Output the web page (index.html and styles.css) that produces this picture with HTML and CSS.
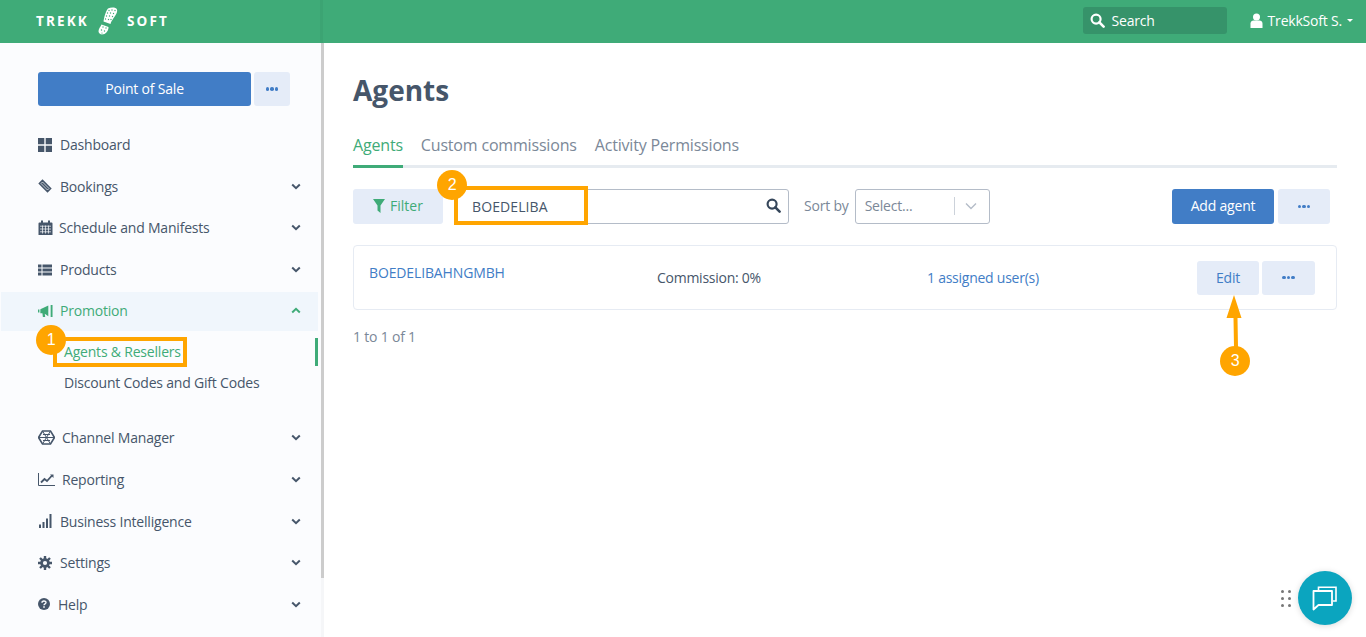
FILE: index.html
```html
<!DOCTYPE html>
<html lang="en">
<head>
<meta charset="utf-8">
<title>Agents</title>
<link rel="stylesheet" href="styles.css">
</head>
<body>
<header class="topbar">
  <div class="brand">
    <span class="brand-word">TREKK</span>
    <svg class="boot" viewBox="0 0 20 28"><path d="M10 1.500c3-1.500 8-1.500 9 1 1 3-2.500 7-4 9.500-1 1.500-2 3-2.500 5l-7-2.500c.5-4 2-10 4.500-13z" fill="#fff"/><path d="M3.500 17.500l7 2.500c.2 3-2 6.500-5 7.300-2.500.6-5-.5-5-3 0-2.500 2-4.500 3-6.800z" fill="#fff"/><g fill="#3fab78"><circle cx="11" cy="3.500" r=".7"/><circle cx="14" cy="3" r=".7"/><circle cx="17" cy="3.500" r=".7"/><circle cx="9.500" cy="6" r=".7"/><circle cx="12.500" cy="6" r=".7"/><circle cx="15.500" cy="6.500" r=".7"/><circle cx="8.500" cy="9" r=".7"/><circle cx="11.500" cy="9" r=".7"/><circle cx="14.500" cy="9.500" r=".7"/><circle cx="7.500" cy="12" r=".7"/><circle cx="10.500" cy="12.500" r=".7"/><circle cx="13" cy="12.500" r=".7"/><circle cx="5" cy="20" r=".7"/><circle cx="8" cy="21" r=".7"/><circle cx="3.500" cy="23" r=".7"/><circle cx="6.500" cy="24" r=".7"/><circle cx="4" cy="26" r=".6"/></g></svg>
    <span class="brand-word">SOFT</span>
  </div>
  <div class="top-right">
    <div class="top-search">
      <svg class="ico-14" viewBox="0 0 16 16"><circle cx="6.500" cy="6.500" r="4.800" fill="none" stroke="#fff" stroke-width="2.300"/><path d="M10 10l4.500 4.500" stroke="#fff" stroke-width="2.800" stroke-linecap="round"/></svg>
      <span>Search</span>
    </div>
    <div class="top-user">
      <svg class="ico-user" viewBox="0 0 13 15"><circle cx="6.500" cy="4" r="3.500" fill="#fff"/><path d="M.5 15V10.500C.5 8.500 2 7.500 3.500 7.500h6c1.500 0 3 1 3 3V15z" fill="#fff"/></svg>
      <span>TrekkSoft S.</span>
      <span class="caret"></span>
    </div>
  </div>
</header>

<div class="layout">
  <aside class="sidebar">
    <div class="pos-row">
      <button class="btn btn-primary pos-btn">Point of Sale</button>
      <button class="btn btn-light more-small"><span class="dots"><i></i><i></i><i></i></span></button>
    </div>
    <nav class="nav">
      <a class="nav-row">
        <svg class="nav-ico" viewBox="0 0 14 14"><path d="M0 0h6.300v6.300H0zM7.700 0H14v6.300H7.700zM0 7.700h6.300V14H0zM7.700 7.700H14V14H7.700z" fill="#46566a"/></svg>
        <span class="nav-label">Dashboard</span>
      </a>
      <a class="nav-row">
        <svg class="nav-ico" viewBox="0 0 14 14"><path d="M4.500.3l9.200 9.200-4.200 4.200L.3 4.500z" fill="#46566a"/><path d="M4.500 3l6.500 6.500-1.500 1.500L3 4.500z" fill="none" stroke="#fbfcfe" stroke-width=".7"/></svg>
        <span class="nav-label">Bookings</span>
        <svg class="chev" viewBox="0 0 10 7"><path d="M1.200 1.500L5 5.200l3.800-3.700" fill="none" stroke="#46566a" stroke-width="2"/></svg>
      </a>
      <a class="nav-row">
        <svg class="nav-ico nav-ico-cal" viewBox="0 0 14 15"><path d="M0 3.500a1 1 0 0 1 1-1h1.500V.5h2v2h5v-2h2v2H13a1 1 0 0 1 1 1V15H0z" fill="#46566a"/><path d="M1.500 6.200h11M1.500 9h11M1.500 11.800h11M4 5.500v8M7 5.500v8M10 5.500v8" stroke="#fbfcfe" stroke-width=".7"/></svg>
        <span class="nav-label">Schedule and Manifests</span>
        <svg class="chev" viewBox="0 0 10 7"><path d="M1.200 1.500L5 5.200l3.800-3.700" fill="none" stroke="#46566a" stroke-width="2"/></svg>
      </a>
      <a class="nav-row">
        <svg class="nav-ico" viewBox="0 0 14 12"><path d="M0 .5h3.500v3H0zM4.500 .5H14v3H4.500zM0 4.500h3.500v3H0zM4.500 4.500H14v3H4.500zM0 8.500h3.500v3H0zM4.500 8.500H14v3H4.500z" fill="#46566a"/></svg>
        <span class="nav-label">Products</span>
        <svg class="chev" viewBox="0 0 10 7"><path d="M1.200 1.500L5 5.200l3.800-3.700" fill="none" stroke="#46566a" stroke-width="2"/></svg>
      </a>
      <a class="nav-row nav-active">
        <svg class="nav-ico nav-ico-promo" viewBox="0 0 16 14"><path d="M0 5.500h1.500v3H0zM2.500 5L11 1v11.500L7.200 10l.5 3.500H5.200L4.700 9.500H2.500zM13.500 .5h2v13h-2z" fill="#3fab78"/></svg>
        <span class="nav-label">Promotion</span>
        <svg class="chev" viewBox="0 0 10 7"><path d="M1.200 5.500L5 1.800l3.800 3.700" fill="none" stroke="#3fab78" stroke-width="2"/></svg>
      </a>
      <div class="subnav">
        <a class="sub-row sub-current">Agents &amp; Resellers</a>
        <a class="sub-row">Discount Codes and Gift Codes</a>
      </div>
      <a class="nav-row">
        <svg class="nav-ico nav-ico-hex" viewBox="0 0 17 15"><path d="M4.500 1h8L16.500 7.500 12.500 14h-8L.5 7.500z" fill="none" stroke="#46566a" stroke-width="1.600"/><path d="M4.500 1l8 13M12.500 1l-8 13M.5 7.500h16M5 4.500h7M5 10.500h7" stroke="#46566a" stroke-width="1"/></svg>
        <span class="nav-label">Channel Manager</span>
        <svg class="chev" viewBox="0 0 10 7"><path d="M1.200 1.500L5 5.200l3.800-3.700" fill="none" stroke="#46566a" stroke-width="2"/></svg>
      </a>
      <a class="nav-row">
        <svg class="nav-ico nav-ico-hex" viewBox="0 0 17 13"><path d="M.5 0v12.500H17" fill="none" stroke="#46566a" stroke-width="1"/><path d="M3 9.500l3.500-3.500 2.500 2 5-5.500" fill="none" stroke="#46566a" stroke-width="1.800"/><path d="M12 1.500h3.500V5z" fill="#46566a"/></svg>
        <span class="nav-label">Reporting</span>
        <svg class="chev" viewBox="0 0 10 7"><path d="M1.200 1.500L5 5.200l3.800-3.700" fill="none" stroke="#46566a" stroke-width="2"/></svg>
      </a>
      <a class="nav-row">
        <svg class="nav-ico" viewBox="0 0 14 14"><path d="M1 10.500h2V14H1zM4.500 8h2v6h-2zM8 4.500h2V14H8zM11.500 0h2v14h-2z" fill="#46566a"/></svg>
        <span class="nav-label">Business Intelligence</span>
        <svg class="chev" viewBox="0 0 10 7"><path d="M1.200 1.500L5 5.200l3.800-3.700" fill="none" stroke="#46566a" stroke-width="2"/></svg>
      </a>
      <a class="nav-row">
        <svg class="nav-ico" viewBox="0 0 14 14"><circle cx="7" cy="7" r="3.500" fill="none" stroke="#46566a" stroke-width="2.600"/><path d="M7 0v14M0 7h14M2 2l10 10M12 2L2 12" stroke="#46566a" stroke-width="2.400"/><circle cx="7" cy="7" r="2.100" fill="#fbfcfe"/></svg>
        <span class="nav-label">Settings</span>
        <svg class="chev" viewBox="0 0 10 7"><path d="M1.200 1.500L5 5.200l3.800-3.700" fill="none" stroke="#46566a" stroke-width="2"/></svg>
      </a>
      <a class="nav-row">
        <svg class="nav-ico nav-ico-help" viewBox="0 0 12 12"><circle cx="6" cy="6" r="6" fill="#46566a"/><path d="M4 4.700C4 2.500 8 2.500 8 4.500c0 1.500-2 1.300-2 2.800" fill="none" stroke="#fbfcfe" stroke-width="1.400"/><path d="M5.200 8.300h1.600v1.500H5.200z" fill="#fbfcfe"/></svg>
        <span class="nav-label">Help</span>
        <svg class="chev" viewBox="0 0 10 7"><path d="M1.200 1.500L5 5.200l3.800-3.700" fill="none" stroke="#46566a" stroke-width="2"/></svg>
      </a>
    </nav>
    <span class="active-mark"></span>
    <span class="scroll-thumb"></span>
    <span class="note-box note-box-1"></span>
    <span class="note-num note-num-1">1</span>
  </aside>

  <main class="main">
    <h1 class="title">Agents</h1>
    <div class="tabs">
      <a class="tab tab-active">Agents</a>
      <a class="tab">Custom commissions</a>
      <a class="tab">Activity Permissions</a>
    </div>
    <div class="toolbar">
      <button class="btn btn-light filter-btn">
        <svg class="ico-filter" viewBox="0 0 12 14"><path d="M0 0h12L7.500 6.500V14l-3-2.500v-5z" fill="#3fab78"/></svg>
        <span>Filter</span>
      </button>
      <div class="search-box">
        <span class="search-value">BOEDELIBA</span>
        <svg class="ico-14" viewBox="0 0 16 16"><circle cx="6.500" cy="6.500" r="4.800" fill="none" stroke="#35465a" stroke-width="2.300"/><path d="M10 10l4.500 4.500" stroke="#35465a" stroke-width="2.800" stroke-linecap="round"/></svg>
        <span class="note-box note-box-2"></span>
        <span class="note-num note-num-2">2</span>
      </div>
      <span class="sort-label">Sort by</span>
      <div class="select-box">
        <span class="select-text">Select...</span>
        <span class="select-sep"></span>
        <svg class="select-chev" viewBox="0 0 12 8"><path d="M1 1.500l5 5 5-5" fill="none" stroke="#b4bcc8" stroke-width="1.400"/></svg>
      </div>
      <div class="toolbar-actions">
        <button class="btn btn-primary add-btn">Add agent</button>
        <button class="btn btn-light more-wide"><span class="dots"><i></i><i></i><i></i></span></button>
      </div>
    </div>
    <section class="card">
      <a class="card-name">BOEDELIBAHNGMBH</a>
      <span class="card-commission">Commission: 0%</span>
      <a class="card-users">1 assigned user(s)</a>
      <div class="card-actions">
        <button class="btn btn-light edit-btn">Edit</button>
        <button class="btn btn-light more-wide"><span class="dots"><i></i><i></i><i></i></span></button>
        <svg class="note-arrow" viewBox="0 0 20 54"><path d="M9 1L16.500 24H12.500L13 53H9L8.500 24H1.500z" fill="#ffa500"/></svg>
        <span class="note-num note-num-3">3</span>
      </div>
    </section>
    <p class="pager">1 to 1 of 1</p>
  </main>
</div>

<div class="chat-dots"><i></i><i></i><i></i><i></i><i></i><i></i></div>
<div class="chat">
  <svg viewBox="0 0 26 26"><path d="M6.500 5V2.200h17.500V16H21" fill="none" stroke="#fff" stroke-width="1.600"/><path d="M1.500 6h18.500v14H6.500L1.500 24.500z" fill="none" stroke="#fff" stroke-width="1.800" stroke-linejoin="round"/></svg>
</div>
</body>
</html>
```
FILE: styles.css
```css
* { box-sizing: border-box; }
html, body { margin: 0; height: 100%; overflow: hidden; }
body {
  font-family: "Open Sans", "Noto Sans", sans-serif;
  font-size: 14px;
  color: #46566a;
  background: #fff;
  letter-spacing: -0.2px;
}
a { color: inherit; text-decoration: none; }
button { font: inherit; letter-spacing: inherit; border: 0; padding: 0; }

.topbar {
  position: relative;
  height: 43px;
  background: #3fab78;
  display: flex;
  align-items: center;
  justify-content: space-between;
  padding: 0 13px 2px 36px;
  color: #fff;
}
.topbar::after {
  content: "";
  position: absolute;
  left: 320px;
  top: 0;
  width: 3px;
  height: 100%;
  background: rgba(0, 0, 0, .04);
}
.brand { display: flex; align-items: center; gap: 9px; }
.brand-word { font-size: 13.500px; font-weight: 700; letter-spacing: 2.150px; }
.boot { width: 20px; height: 28px; }
.top-right { display: flex; align-items: center; }
.top-search {
  width: 144px;
  height: 27px;
  margin-right: 23px;
  padding-left: 7px;
  background: #36936a;
  border-radius: 3px;
  display: flex;
  align-items: center;
  gap: 7px;
}
.top-user { display: flex; align-items: center; gap: 5px; }
.ico-14 { width: 15px; height: 15px; flex: none; }
.ico-user { width: 13px; height: 15px; }
.caret {
  border-left: 3px solid transparent;
  border-right: 3px solid transparent;
  border-top: 3px solid #fff;
}

.layout { display: flex; height: 594px; }
.sidebar {
  position: relative;
  width: 324px;
  flex: none;
  padding: 29px 0 0;
  background: #fbfcfe;
  border-right: 3px solid #f5f6f8;
}
.scroll-thumb {
  position: absolute;
  top: 0;
  right: -3px;
  width: 3px;
  height: 535px;
  background: #ccc;
}
.pos-row { display: flex; gap: 3px; padding-left: 38px; }
.btn {
  height: 34px;
  border-radius: 3px;
  display: inline-flex;
  align-items: center;
  justify-content: center;
  cursor: pointer;
}
.btn-primary { background: #417dc6; color: #fff; }
.btn-light { background: #e5ecf8; color: #417dc6; }
.pos-btn { width: 213px; padding-bottom: 2px; }
.more-small { width: 36px; }
.more-wide { width: 53px; }
.dots { display: flex; gap: 1px; }
.dots i { width: 3.500px; height: 3.500px; border-radius: 50%; background: #417dc6; }

.nav { margin-top: 18px; width: 317px; margin-left: 1px; }
.nav-row {
  height: 41.600px;
  display: flex;
  align-items: center;
  padding: 0 17px 0 37px;
}
.nav-ico { width: 14px; height: 14px; flex: none; margin-right: 8px; }
.nav-ico-cal { width: 15px; height: 15px; margin-right: 6px; }
.nav-ico-promo { width: 15px; margin-right: 7px; }
.nav-ico-hex { width: 17px; height: 15px; margin-right: 7px; }
.nav-ico-help { width: 12px; height: 12px; margin-right: 8px; }
.nav-label { flex: 1; }
.chev { width: 10px; height: 7px; flex: none; }
.nav-active {
  height: 39px;
  margin: 1.600px 0 .4px;
  padding-bottom: 1px;
  background: #f0f6fc;
  color: #3fab78;
}
.subnav { display: flex; flex-direction: column; padding: 5px 0 18.800px 63px; }
.sub-row { height: 31px; display: flex; align-items: center; }
.sub-current { color: #3fab78; }
.active-mark {
  position: absolute;
  left: 315px;
  top: 295px;
  width: 3px;
  height: 28px;
  background: #3fab78;
}

.main { flex: 1; padding: 27px 29px 0 29px; }
.title { margin: 0; font-size: 28px; line-height: 41px; font-weight: 700; color: #46566a; letter-spacing: 0; }
.tabs {
  display: flex;
  gap: 18px;
  margin-top: 19px;
  border-bottom: 3px solid #e6ebf0;
  height: 38px;
}
.tab { font-size: 16px; line-height: 24px; height: 38px; padding-top: 3px; color: #7b8898; letter-spacing: -0.18px; }
.tab-active { color: #3fab78; border-bottom: 3px solid #3fab78; }

.toolbar { display: flex; align-items: center; margin-top: 21px; height: 35px; }
.filter-btn { width: 90px; height: 35px; gap: 5px; padding: 0 0 2px; color: #3fab78; background: #e5ecf8; letter-spacing: 0; }
.ico-filter { width: 12px; height: 14px; }
.search-box {
  position: relative;
  width: 334px;
  height: 35px;
  margin-left: 12px;
  padding: 0 7px 0 16px;
  border: 1px solid #b4bcc8;
  border-radius: 3px;
  background: #fff;
  display: flex;
  align-items: center;
  justify-content: space-between;
}
.search-box .ico-14 { margin-bottom: 3px; }
.search-value { color: #46566a; letter-spacing: .1px; }
.sort-label { margin-left: 15px; padding-bottom: 2px; color: #7b8898; }
.select-box {
  width: 135px;
  height: 35px;
  margin-left: 6px;
  padding: 0 12px 2px 9px;
  border: 1px solid #b4bcc8;
  border-radius: 3px;
  display: flex;
  align-items: center;
}
.select-text { flex: 1; color: #7b8898; }
.select-sep { width: 1px; height: 18px; background: #ccd2da; margin-right: 10px; }
.select-chev { width: 12px; height: 8px; }
.toolbar-actions { display: flex; gap: 4px; margin-left: auto; margin-right: 7px; }
.add-btn { width: 102px; height: 35px; padding-bottom: 2px; }
.toolbar-actions .more-wide { width: 52px; height: 35px; }

.card {
  height: 65px;
  margin-top: 21px;
  border: 1px solid #e6ebf3;
  border-radius: 4px;
  display: flex;
  align-items: center;
  padding: 0 21px 0 15px;
}
.card-name { width: 288px; margin-top: -10px; color: #417dc6; letter-spacing: -0.13px; }
.card-commission { width: 270px; letter-spacing: -0.26px; }
.card-users { color: #417dc6; letter-spacing: -0.25px; }
.card-actions { position: relative; display: flex; gap: 3px; margin-left: auto; }
.edit-btn { width: 62px; }
.pager { margin: 17px 0 0; color: #7b8898; }

.note-box {
  position: absolute;
  border: 4px solid #ffa500;
  pointer-events: none;
}
.note-box-1 { left: 53px; top: 294px; width: 134px; height: 30px; }
.note-box-2 { left: -2px; top: -4px; width: 134px; height: 39px; }
.note-num {
  position: absolute;
  width: 30px;
  height: 30px;
  border-radius: 50%;
  background: #ffa500;
  color: #fff;
  font-size: 16px;
  line-height: 30px;
  text-align: center;
  font-family: "Liberation Sans", sans-serif;
}
.note-num-1 { left: 36px; top: 282px; }
.note-num-2 { left: -19px; top: -20px; }
.note-num-3 { left: 23px; top: 85px; }
.note-arrow { position: absolute; left: 28px; top: 33px; width: 20px; height: 54px; }

.chat {
  position: fixed;
  left: 1298px;
  top: 571px;
  width: 54px;
  height: 54px;
  border-radius: 50%;
  background: #0ba5bf;
  box-shadow: 0 1px 6px rgba(0, 0, 0, .15);
  display: flex;
  align-items: center;
  justify-content: center;
}
.chat svg { width: 26px; height: 26px; }
.chat-dots {
  position: fixed;
  left: 1281px;
  top: 590px;
  display: grid;
  grid-template-columns: 3px 3px;
  gap: 4px;
}
.chat-dots i { width: 3px; height: 3px; border-radius: 50%; background: #777; }
```
